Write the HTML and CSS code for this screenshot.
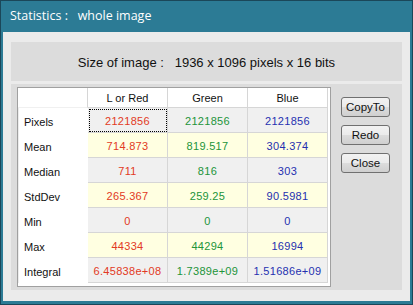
FILE: index.html
```html
<!DOCTYPE html>
<html>
<head>
    <meta charset="utf-8">
    <link rel="stylesheet" href="styles.css">
</head>
<body>
    <div class="window">
        <div class="titlebar">Statistics :&nbsp;&nbsp; whole image</div>
        <div class="client">
            <div class="size-panel">Size of image :&nbsp;&nbsp; 1936 x 1096 pixels x 16 bits</div>
            <div class="main-panel">
                <div class="stats">
                    <div class="cell corner"></div>
                    <div class="cell head">L or Red</div>
                    <div class="cell head">Green</div>
                    <div class="cell head">Blue</div>

                    <div class="cell label">Pixels</div>
                    <div class="cell grey red focus">2121856</div>
                    <div class="cell grey green">2121856</div>
                    <div class="cell grey blue">2121856</div>

                    <div class="cell label">Mean</div>
                    <div class="cell yellow red">714.873</div>
                    <div class="cell yellow green">819.517</div>
                    <div class="cell yellow blue">304.374</div>

                    <div class="cell label">Median</div>
                    <div class="cell grey red">711</div>
                    <div class="cell grey green">816</div>
                    <div class="cell grey blue">303</div>

                    <div class="cell label">StdDev</div>
                    <div class="cell yellow red">265.367</div>
                    <div class="cell yellow green">259.25</div>
                    <div class="cell yellow blue">90.5981</div>

                    <div class="cell label">Min</div>
                    <div class="cell grey red">0</div>
                    <div class="cell grey green">0</div>
                    <div class="cell grey blue">0</div>

                    <div class="cell label">Max</div>
                    <div class="cell yellow red">44334</div>
                    <div class="cell yellow green">44294</div>
                    <div class="cell yellow blue">16994</div>

                    <div class="cell label">Integral</div>
                    <div class="cell grey red">6.45838e+08</div>
                    <div class="cell grey green">1.7389e+09</div>
                    <div class="cell grey blue">1.51686e+09</div>
                </div>
                <div class="buttons">
                    <button class="btn">CopyTo</button>
                    <button class="btn">Redo</button>
                    <button class="btn">Close</button>
                </div>
            </div>
        </div>
    </div>
</body>
</html>
```

FILE: styles.css
```css
* {
    box-sizing: border-box;
}

body {
    margin: 0;
    font-family: 'Liberation Sans', Arial, sans-serif;
    font-size: 11px;
    color: #000;
    background: #1b4759;
}

.window {
    width: 413px;
    height: 305px;
    display: flex;
    flex-direction: column;
    background: #2c7b95;
    border: 1px solid #1b4759;
    padding: 0 2px 3px 2px;
}

.titlebar {
    height: 31px;
    padding-left: 7px;
    line-height: 30px;
    color: #fff;
    font-family: 'Open Sans', sans-serif;
    font-size: 12.5px;
}

.client {
    flex: 1;
    display: flex;
    flex-direction: column;
    gap: 3px;
    background: #ebebeb;
    padding: 10px 8px 11px 8px;
}

.size-panel {
    height: 39px;
    background: #dcdcdc;
    text-align: center;
    line-height: 41px;
    font-size: 13px;
    color: #111;
}

.main-panel {
    flex: 1;
    display: flex;
    align-items: flex-start;
    gap: 10px;
    background: #dcdcdc;
    padding: 3px 0 0 6px;
}

/* table of values */
.stats {
    width: 314px;
    height: 200px;
    background: #fff;
    border: 1px solid #a0a0a0;
    display: grid;
    grid-template-columns: 70px 80px 80px 80px;
    grid-template-rows: 20px repeat(7, 25px);
    align-content: start;
}

.cell {
    display: flex;
    align-items: center;
    justify-content: center;
    white-space: nowrap;
    padding-top: 2px;
}

.corner {
    border-right: 1px solid #d6d6d6;
    border-bottom: 1px solid #f0f0f0;
}

.head {
    padding-top: 1px;
    border-right: 1px solid #d6d6d6;
    border-bottom: 1px solid #d6d6d6;
    color: #111;
}

.label {
    justify-content: flex-start;
    padding-left: 5px;
    border-left: 1px solid #ececec;
    color: #111;
}

.grey,
.yellow {
    letter-spacing: 0.3px;
    border-right: 1px solid #d6d6d6;
    border-bottom: 1px solid #d6d6d6;
}

.grey {
    background: #f0f0f0;
}

.yellow {
    background: #ffffe1;
}

.red {
    color: #e23a24;
}

.green {
    color: #22943a;
}

.blue {
    color: #2530b0;
}

.focus {
    outline: 1px dotted #000;
    outline-offset: -2px;
}

.buttons {
    display: flex;
    flex-direction: column;
    gap: 8px;
    padding-top: 10px;
}

.btn {
    width: 49px;
    height: 20px;
    padding: 0;
    font-family: 'Liberation Sans', Arial, sans-serif;
    font-size: 11.5px;
    color: #111;
    border: 1px solid #707070;
    border-radius: 3px;
    background: linear-gradient(#f2f2f2, #ebebeb 50%, #dddddd 50%, #cfcfcf);
}
```
